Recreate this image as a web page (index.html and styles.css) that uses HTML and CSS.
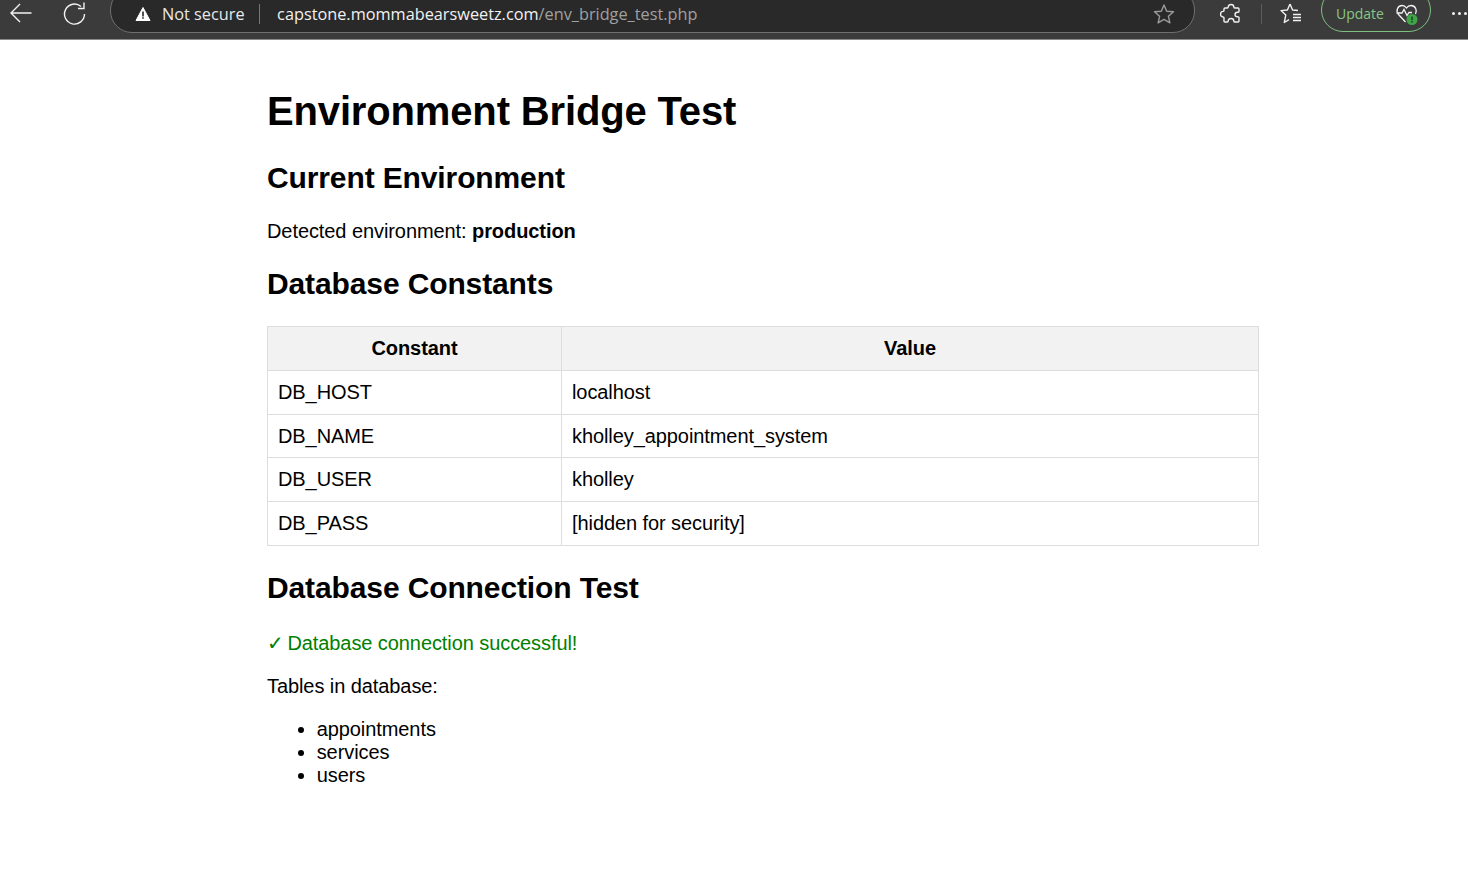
FILE: index.html
```html
<!DOCTYPE html>
<html lang="en">
<head>
  <meta charset="UTF-8">
  <title>Environment Bridge Test</title>
  <link rel="stylesheet" href="styles.css">
</head>
<body>

<div class="toolbar">
  <svg class="icon back" width="24" height="24" viewBox="0 0 24 24"><path d="M22.500 12H2M11 3L2 12l9 9"/></svg>
  <svg class="icon reload" width="24" height="24" viewBox="0 0 24 24"><path d="M18 4.500A10 10 0 1 0 21.500 12M21 .5V6.500H15"/></svg>
  <div class="address">
    <svg class="warn" width="16" height="16" viewBox="0 0 16 16"><path fill="#fff" stroke="#fff" stroke-linejoin="round" d="M8 1.500L15 14.500H1z"/><path fill="#292929" d="M7.200 5.500h1.600v5H7.200zM7.200 11.300h1.600v1.500H7.200z"/></svg>
    <span class="secure">Not secure</span>
    <span class="divider"></span>
    <span class="url">capstone.mommabearsweetz.com<span class="url-path">/env_bridge_test.php</span></span>
    <svg class="icon star" width="22" height="22" viewBox="0 0 22 22"><path stroke-linejoin="round" d="M11 2l2.700 6.200 6.800.6-5.100 4.500 1.500 6.600L11 16.400l-5.900 3.500 1.500-6.600L1.500 8.800l6.800-.6z"/></svg>
  </div>
  <svg class="icon puzzle" width="22" height="22" viewBox="0 0 22 22"><path stroke-linejoin="round" d="M8.200 4C8.200.6 13.800.6 13.800 4c0 .7 .4 1 1 1h3.200c.6 0 1 .4 1 1v2.500c0 .6-.6.8-1.500.8-3.300 0-3.300 4.400 0 4.400 .9 0 1.500.3 1.500.8V18c0 .6-.4 1-1 1h-3.500c-.5 0-.7-.4-.7-1 0-3.300-5.600-3.300-5.600 0 0 .6-.3 1-.8 1H5c-.6 0-1-.4-1-1v-3.200c0-.6-.4-.8-1-.8-3.300 0-3.300-5.600 0-5.600 .6 0 1-.3 1-.8V6c0-.6.4-1 1-1h2.300c.5 0 .9-.4.900-1z"/></svg>
  <span class="tool-sep"></span>
  <svg class="icon favs" width="24" height="24" viewBox="0 0 24 24"><path stroke-linejoin="round" d="M11 2l-2.600 6-6.400.6 4.800 4.300L5.300 20.500l4.700-2.800M11 2l2.600 6 5.400.5"/><path d="M14 12.500h8M14 15.500h8M14 18.500h8"/></svg>
  <div class="update">
    <span>Update</span>
    <svg class="heart" width="24" height="24" viewBox="0 0 24 24">
      <path class="heart-line" d="M10.500 20L3.500 12.500C.5 9 2.500 3.500 7 3.500c2 0 3.500 1 4.500 2.500C12.500 4.500 14 3.500 16 3.500c4.500 0 6.500 5 4.500 8.500M1.500 11H7l2-3.500 3 6 2-3h3"/>
      <circle cx="17" cy="17.500" r="5.500" fill="#3fa648"/>
      <path fill="#1f3a22" d="M16.300 14.500h1.400v3.800h-1.400zM16.300 19h1.400v1.400h-1.400z"/>
    </svg>
  </div>
  <div class="more"><i></i><i></i><i></i></div>
</div>

<div class="container">
  <h1>Environment Bridge Test</h1>

  <h2>Current Environment</h2>
  <p>Detected environment: <strong>production</strong></p>

  <h2 class="constants-title">Database Constants</h2>
  <table>
    <thead>
    <tr>
      <th class="col-name">Constant</th>
      <th>Value</th>
    </tr>
    </thead>
    <tbody>
    <tr>
      <td>DB_HOST</td>
      <td>localhost</td>
    </tr>
    <tr>
      <td>DB_NAME</td>
      <td>kholley_appointment_system</td>
    </tr>
    <tr>
      <td>DB_USER</td>
      <td>kholley</td>
    </tr>
    <tr>
      <td>DB_PASS</td>
      <td>[hidden for security]</td>
    </tr>
    </tbody>
  </table>

  <h2 class="connection-title">Database Connection Test</h2>
  <p class="success"><span class="check">✓</span> Database connection successful!</p>
  <p>Tables in database:</p>
  <ul>
    <li>appointments</li>
    <li>services</li>
    <li>users</li>
  </ul>
</div>

</body>
</html>
```

FILE: styles.css
```css
body {
    margin: 0;
    font-family: "Liberation Sans", Arial, sans-serif;
    font-size: 20px;
    letter-spacing: -0.08px;
    background-color: #ffffff;
    color: #000000;
}

.toolbar {
    height: 39px;
    border-bottom: 1px solid #8a8a8a;
    background-color: #3b3b3b;
    display: flex;
    align-items: flex-start;
    font-family: "Open Sans", sans-serif;
    letter-spacing: 0;
    overflow: hidden;
}

.icon {
    flex: none;
    fill: none;
    stroke: #f2f2f2;
    stroke-width: 1.4;
}

.back {
    margin-left: 9px;
    margin-top: 1px;
}

.reload {
    margin-left: 30px;
    margin-top: 2px;
}

.address {
    flex: none;
    box-sizing: border-box;
    width: 1085px;
    height: 45px;
    margin-top: -12px;
    margin-left: 23px;
    padding-left: 24px;
    padding-top: 7px;
    border: 1px solid #6f6f6f;
    border-radius: 22px;
    background-color: #292929;
    display: flex;
    align-items: center;
}

.warn {
    flex: none;
}

.secure {
    margin-left: 11px;
    font-size: 16.300px;
    color: #e8e8e8;
}

.divider {
    width: 1px;
    height: 20px;
    margin-left: 14px;
    background-color: #777777;
}

.url {
    margin-left: 17.500px;
    font-size: 16.300px;
    color: #f2f2f2;
}

.url-path {
    color: #a0a0a0;
}

.star {
    margin-left: auto;
    margin-right: 19px;
    stroke: #9a9a9a;
}

.puzzle {
    margin-left: 25px;
    margin-top: 3px;
}

.tool-sep {
    width: 1px;
    height: 20px;
    margin-left: 19px;
    margin-top: 4px;
    background-color: #5c5c5c;
}

.favs {
    margin-left: 17px;
    margin-top: 2px;
}

.update {
    flex: none;
    box-sizing: border-box;
    width: 110px;
    height: 44px;
    margin-top: -12px;
    margin-left: 18px;
    padding-top: 7px;
    padding-left: 14px;
    border: 1.500px solid #7fbf80;
    border-radius: 22px;
    display: flex;
    align-items: center;
    gap: 11px;
    font-size: 14px;
    color: #86c787;
}

.heart {
    flex: none;
}

.heart-line {
    fill: none;
    stroke: #f2f2f2;
    stroke-width: 1.3;
}

.more {
    display: flex;
    gap: 3px;
    margin-left: 21px;
    margin-top: 12px;
}

.more i {
    width: 3px;
    height: 3px;
    border-radius: 50%;
    background-color: #f2f2f2;
}

.container {
    width: 992px;
    margin-left: 267px;
    padding-top: 21.800px;
}

h1 {
    font-size: 40px;
    letter-spacing: -0.15px;
    margin: 26.800px 0 27.200px;
}

h2 {
    font-size: 30px;
    letter-spacing: -0.12px;
    margin: 24.900px 0;
}

.constants-title {
    margin-top: 24.550px;
}

.connection-title {
    margin-bottom: 25.950px;
}

p {
    margin: 20px 0;
}

table {
    width: 100%;
    border-collapse: collapse;
}

th, td {
    padding: 10px;
    line-height: 22.750px;
    text-align: left;
    border: 1px solid #dddddd;
}

th {
    text-align: center;
    background-color: #f2f2f2;
}

.col-name {
    width: 273px;
}

.success {
    color: #008000;
}

.check {
    margin-right: -2px;
}

ul {
    margin: 20px 0;
    padding-left: 49.700px;
}
```
